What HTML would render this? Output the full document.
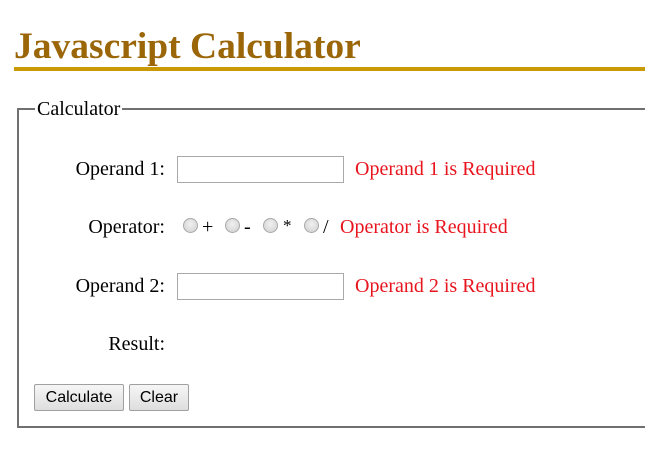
<!DOCTYPE html>
<html><head><style>
body{margin:0;width:645px;height:476px;background:#fff;position:relative;overflow:hidden;font-family:"Liberation Serif",serif;}
.a{position:absolute;white-space:nowrap;line-height:23px;}
h1{position:absolute;left:14px;top:25px;margin:0;font:bold 37.5px "Liberation Serif",serif;color:#9a6608;}
.bar{position:absolute;left:14px;top:67px;width:631px;height:4px;background:#c99a06;}
.fs{position:absolute;left:17px;top:108px;width:626px;height:316px;border:2px solid #707070;border-right:none;}
.leg{position:absolute;left:35px;top:98px;background:#fff;padding:0 2px;font-size:20px;}
.lbl{font-size:20px;text-align:right;width:150px;left:15px;}
.err{color:#e8141e;font-size:20px;}
.inp{position:absolute;left:177px;width:165px;height:25px;border:1px solid #a9a9a9;background:#fff;}
.r{position:absolute;width:13px;height:13px;border-radius:50%;border:1px solid #a8a8a8;background:radial-gradient(circle at 50% 40%,#f0f0f0,#cfcfcf);}
.op{font-size:20px;}
.btn{position:absolute;top:384px;height:25px;border:1px solid #a0a0a0;border-radius:2px;background:linear-gradient(#f6f6f6,#dedede);font:16px "Liberation Sans",sans-serif;line-height:25px;text-align:center;}
</style></head><body>
<h1>Javascript Calculator</h1>
<div class="bar"></div>
<div class="fs"></div>
<div class="a leg">Calculator</div>
<div class="a lbl" style="top:158px">Operand 1:</div>
<div class="inp" style="top:156px"></div>
<div class="a err" style="left:355px;top:158px">Operand 1 is Required</div>
<div class="a lbl" style="top:216px">Operator:</div>
<div class="r" style="left:183px;top:218px"></div><div class="a op" style="left:202px;top:216px">+</div>
<div class="r" style="left:225px;top:218px"></div><div class="a op" style="left:244px;top:216px">-</div>
<div class="r" style="left:263px;top:218px"></div><div class="a op" style="left:283px;top:214px;font-size:17px">*</div>
<div class="r" style="left:304px;top:218px"></div><div class="a op" style="left:323px;top:216px">/</div>
<div class="a err" style="left:340px;top:216px">Operator is Required</div>
<div class="a lbl" style="top:275px">Operand 2:</div>
<div class="inp" style="top:273px"></div>
<div class="a err" style="left:355px;top:275px">Operand 2 is Required</div>
<div class="a lbl" style="top:333px">Result:</div>
<div class="btn" style="left:34px;width:88px">Calculate</div>
<div class="btn" style="left:129px;width:58px">Clear</div>
</body></html>
